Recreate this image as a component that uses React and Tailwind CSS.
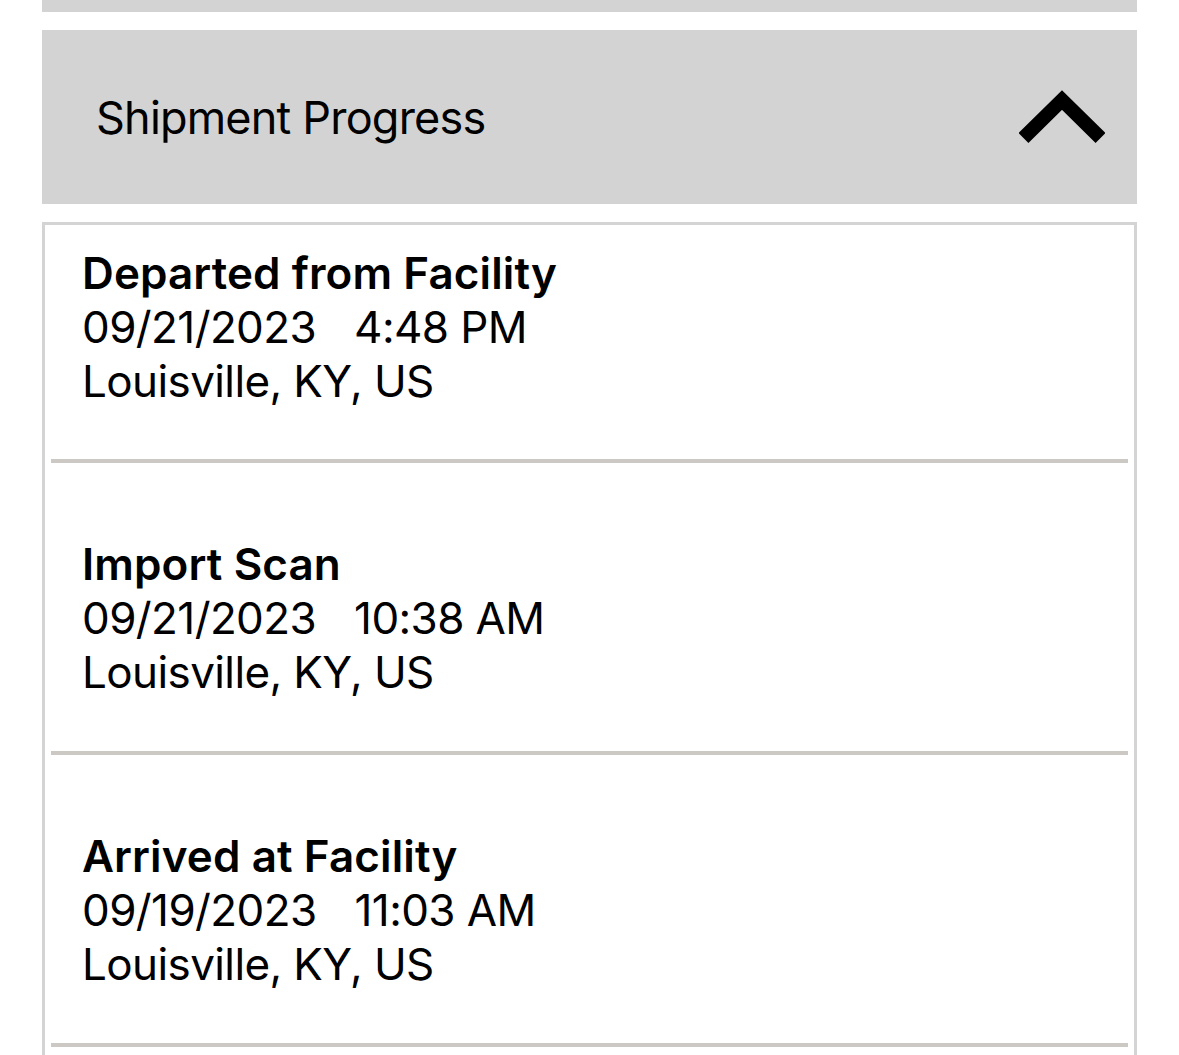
import React from "react";

const events = [
  { title: "Departed from Facility", date: "09/21/2023", time: "4:48 PM", place: "Louisville, KY, US" },
  { title: "Import Scan", date: "09/21/2023", time: "10:38 AM", place: "Louisville, KY, US" },
  { title: "Arrived at Facility", date: "09/19/2023", time: "11:03 AM", place: "Louisville, KY, US" },
];

export default function App() {
  return (
    <div className="h-[1055px] w-[1179px] overflow-hidden bg-white px-[42px] text-black" style={{ fontFamily: "Inter, 'Noto Sans', sans-serif" }}>
      <div className="h-[12px] bg-[#d3d3d3]" />
      <div className="mt-[18px] flex h-[174px] items-center justify-between bg-[#d3d3d3] pl-[54px] pr-[32px]">
        <span className="text-[45px] leading-[55px] tracking-[-0.8px]">Shipment Progress</span>
        <svg width="86" height="54" viewBox="0 0 86 54" className="block">
          <polyline points="4.5,48 43,10 81.5,48" fill="none" stroke="#000" strokeWidth="14" strokeLinecap="butt" strokeLinejoin="miter" />
        </svg>
      </div>
      <div className="mt-[18px] border-[3px] border-[#d4d4d4] px-[6px] pb-[40px]">
        {events.map((e, i) => (
          <div key={i} className={`border-b-4 border-[#ccc8c3] pl-[31px] ${i === 0 ? "pt-[21px] pb-[51px]" : "pt-[74px] pb-[52px]"}`}>
            <div className="text-[44px] font-semibold leading-[54px] tracking-[0.1px]">{e.title}</div>
            <div className="flex text-[44px] leading-[54px] tracking-[-0.6px]">
              <span>{e.date}</span>
              <span className="ml-[38px]">{e.time}</span>
            </div>
            <div className="text-[44px] leading-[54px] tracking-[-0.6px]">{e.place}</div>
          </div>
        ))}
      </div>
    </div>
  );
}
